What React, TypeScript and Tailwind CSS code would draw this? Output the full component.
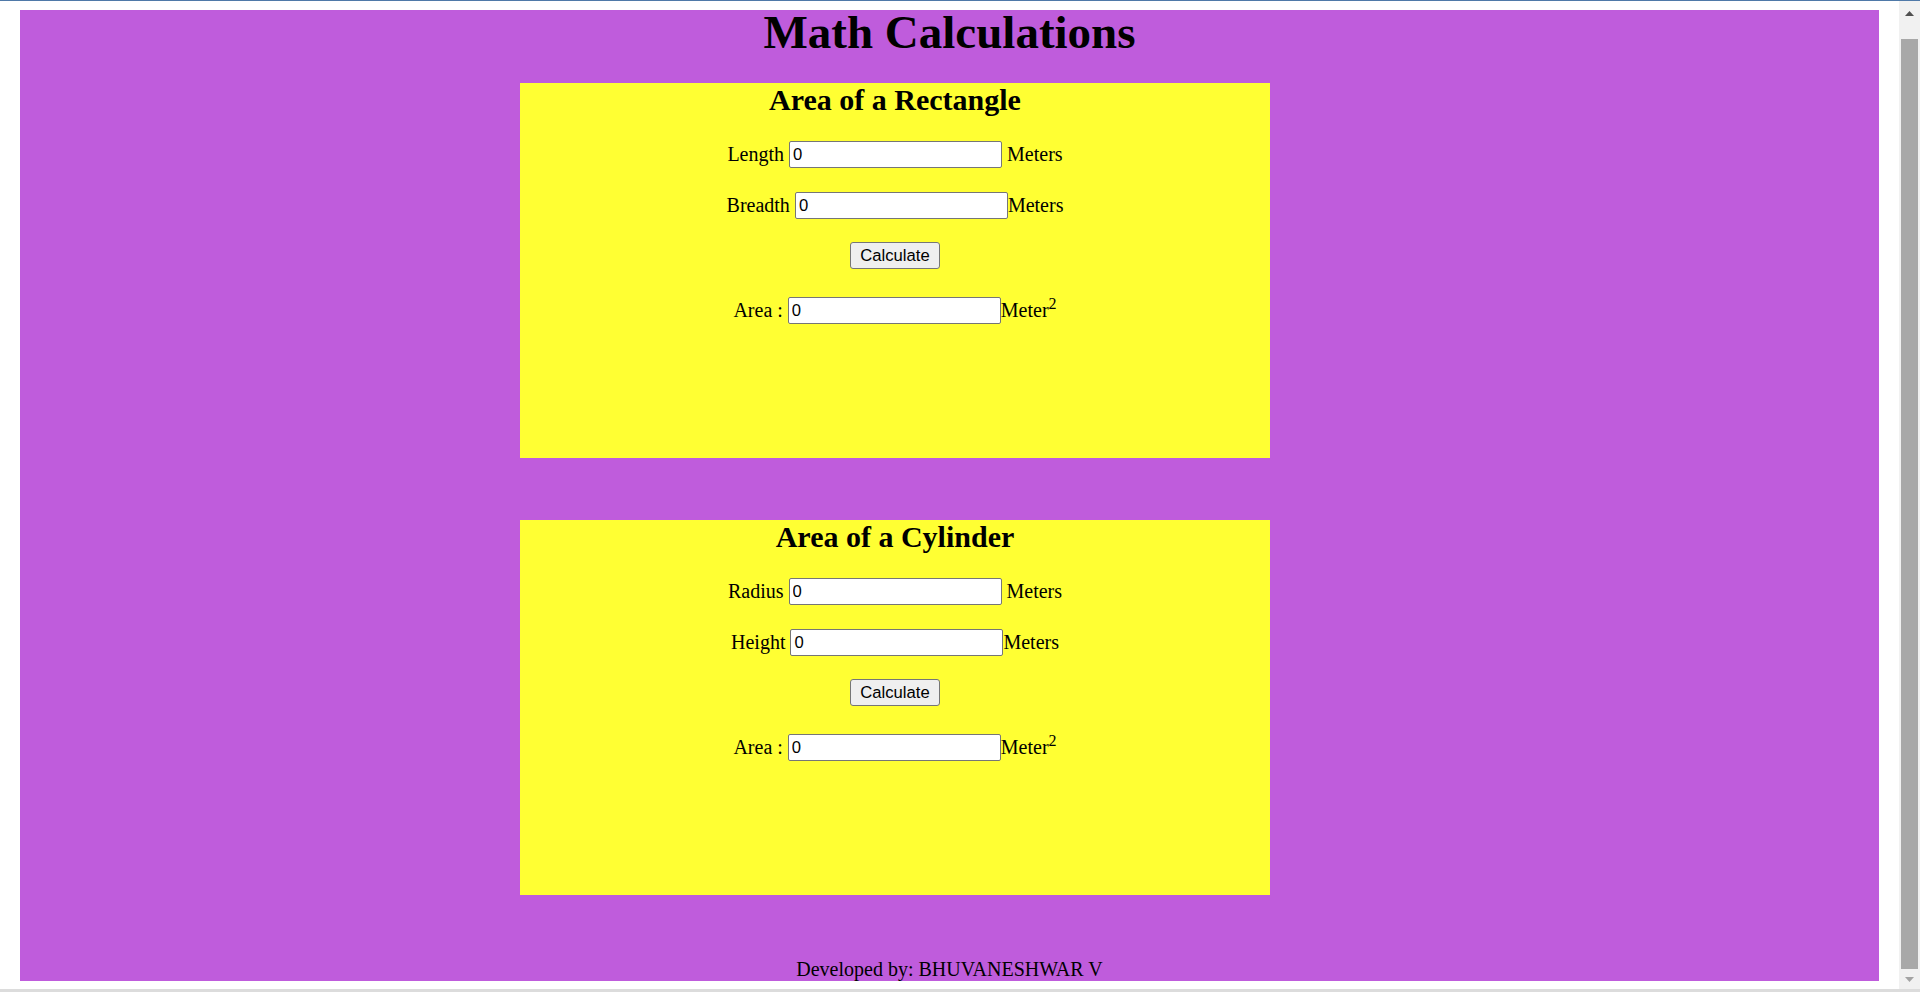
import React from "react";

const serif = "font-['Liberation_Serif','Times_New_Roman',serif]";

function Field({
  label,
  unit,
  spaced,
  sup,
}: {
  label: string;
  unit: string;
  spaced: boolean;
  sup?: boolean;
}) {
  return (
    <div className="flex justify-center items-center h-[27px]">
      <span className="text-[20px] leading-[27px] text-black">{label}</span>
      <input
        type="text"
        defaultValue="0"
        className="ml-[5px] w-[213px] h-[27px] bg-white border border-[#767676] rounded-[2px] px-[3px] text-[16.67px] text-black font-['Liberation_Sans',Arial,sans-serif] outline-none"
      />
      <span className={`text-[20px] leading-[27px] text-black ${spaced ? "ml-[5px]" : ""}`}>
        {unit}
        {sup && <sup className="text-[16px] top-[-8px]">2</sup>}
      </span>
    </div>
  );
}

function CalcButton() {
  return (
    <div className="flex justify-center">
      <button
        type="button"
        className="w-[90px] h-[27px] bg-[#efefef] border border-[#767676] rounded-[3px] text-[16.67px] text-black font-['Liberation_Sans',Arial,sans-serif]"
      >
        Calculate
      </button>
    </div>
  );
}

function Card({
  title,
  first,
  second,
  firstSpaced,
  secondSpaced,
  className,
}: {
  title: string;
  first: string;
  second: string;
  firstSpaced: boolean;
  secondSpaced: boolean;
  className: string;
}) {
  return (
    <div className={`w-[750px] h-[375px] ml-[500px] bg-[#ffff33] flex flex-col ${className}`}>
      <h2 className="text-[30px] font-bold leading-[34px] h-[34px] text-center text-black">{title}</h2>
      <div className="mt-[24px]">
        <Field label={first} unit="Meters" spaced={firstSpaced} />
      </div>
      <div className="mt-[24px]">
        <Field label={second} unit="Meters" spaced={secondSpaced} />
      </div>
      <div className="mt-[23px]">
        <CalcButton />
      </div>
      <div className="mt-[28px]">
        <Field label="Area :" unit="Meter" spaced={false} sup />
      </div>
    </div>
  );
}

function Scrollbar() {
  return (
    <div className="w-[21px] bg-[#f1f1f1] flex flex-col items-center">
      <div className="h-[24px] w-full flex items-center justify-center">
        <svg width="9" height="5" viewBox="0 0 9 5">
          <polygon points="0,5 4.5,0 9,5" fill="#505050" />
        </svg>
      </div>
      <div className="mt-[14px] w-[17px] h-[930px] bg-[#a8a8a8]" />
      <div className="h-[20px] w-full flex items-center justify-center">
        <svg width="9" height="5" viewBox="0 0 9 5">
          <polygon points="0,0 9,0 4.5,5" fill="#a3a3a3" />
        </svg>
      </div>
    </div>
  );
}

export default function App() {
  return (
    <div className={`w-[1920px] h-[992px] bg-white flex flex-col overflow-hidden ${serif}`}>
      <div className="h-[1px] shrink-0 bg-[#4f79a8]" />
      <div className="flex flex-1 min-h-0">
        <div className="flex-1 pl-[20px] pr-[20px] pt-[9px]">
          <div className="h-[971px] bg-[#bf5cdc] flex flex-col">
            <h1 className="mt-[2px] text-[47px] font-bold leading-[40px] h-[40px] text-center text-black">
              Math Calculations
            </h1>
            <Card
              className="mt-[31px]"
              title="Area of a Rectangle"
              first="Length"
              second="Breadth"
              firstSpaced={true}
              secondSpaced={false}
            />
            <Card
              className="mt-[62px]"
              title="Area of a Cylinder"
              first="Radius"
              second="Height"
              firstSpaced={true}
              secondSpaced={false}
            />
            <div className="mt-[63px] text-[20px] leading-[23px] text-center text-black">
              Developed by: BHUVANESHWAR V
            </div>
          </div>
        </div>
        <Scrollbar />
      </div>
      <div className="h-[3px] shrink-0 bg-[#dcdcdc]" />
    </div>
  );
}
